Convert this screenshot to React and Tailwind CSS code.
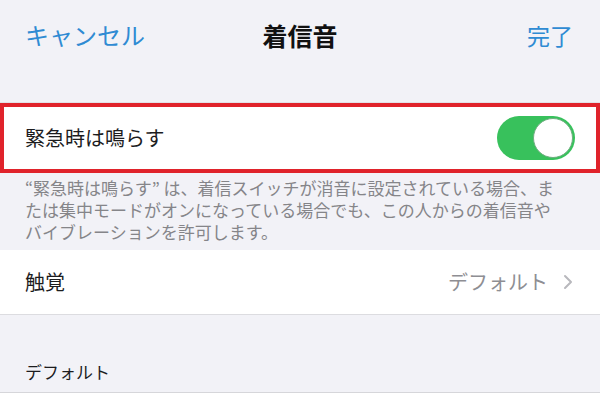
import React from 'react';

function Toggle() {
  return (
    <div className="w-[78px] h-[44px] rounded-full bg-[#38c15c] flex items-center justify-end p-[2px]">
      <div className="w-[40px] h-[40px] rounded-full bg-white border-[1.5px] border-[#6fae80]" />
    </div>
  );
}

export default function App() {
  return (
    <div className="w-[600px] h-[404px] bg-[#f2f2f7] overflow-hidden font-['Noto_Sans_CJK_JP','Noto_Sans',sans-serif]">
      <div className="h-[70px] grid grid-cols-3 items-center px-[25px]">
        <span className="text-[24px] leading-none text-[#2f8bd3] justify-self-start">キャンセル</span>
        <span className="text-[25px] leading-none font-bold text-[#111] justify-self-center">着信音</span>
        <span className="text-[23px] leading-none text-[#2f8bd3] justify-self-end pr-[2px]">完了</span>
      </div>
      <div className="h-[33px] border-b border-[#e2e2e6]" />

      <div className="h-[70px] border-4 border-[#e0232b] bg-white flex items-center justify-between pl-[21px] pr-[21px]">
        <span className="text-[20px] leading-none text-[#1c1c1e]">緊急時は鳴らす</span>
        <Toggle />
      </div>

      <div className="px-[25px] pt-[4px] pb-[7px] text-[17px] text-[#858589] whitespace-nowrap">
        <p className="h-[22px] leading-[22px]">“緊急時は鳴らす” は、着信スイッチが消音に設定されている場合、ま</p>
        <p className="h-[22px] leading-[22px]">たは集中モードがオンになっている場合でも、この人からの着信音や</p>
        <p className="h-[22px] leading-[22px]">バイブレーションを許可します。</p>
      </div>

      <div className="h-[65px] bg-white border-b border-[#dcdce0] flex items-center justify-between pl-[25px] pr-[27px]">
        <span className="text-[20px] leading-none text-[#1c1c1e]">触覚</span>
        <div className="flex items-center gap-[15px] text-[#8e8e93]">
          <span className="text-[20px] leading-none">デフォルト</span>
          <svg width="10" height="16" viewBox="0 0 10 16" fill="none">
            <path d="M2 2l6 6-6 6" stroke="#b8b8bd" strokeWidth="2" strokeLinecap="round" strokeLinejoin="round" />
          </svg>
        </div>
      </div>

      <div className="h-[78px] flex items-end px-[25px] pb-[12px] border-b border-[#d6d6da]">
        <span className="text-[17px] leading-none text-[#1c1c1e]">デフォルト</span>
      </div>
      <div className="h-[20px] bg-white" />
    </div>
  );
}
